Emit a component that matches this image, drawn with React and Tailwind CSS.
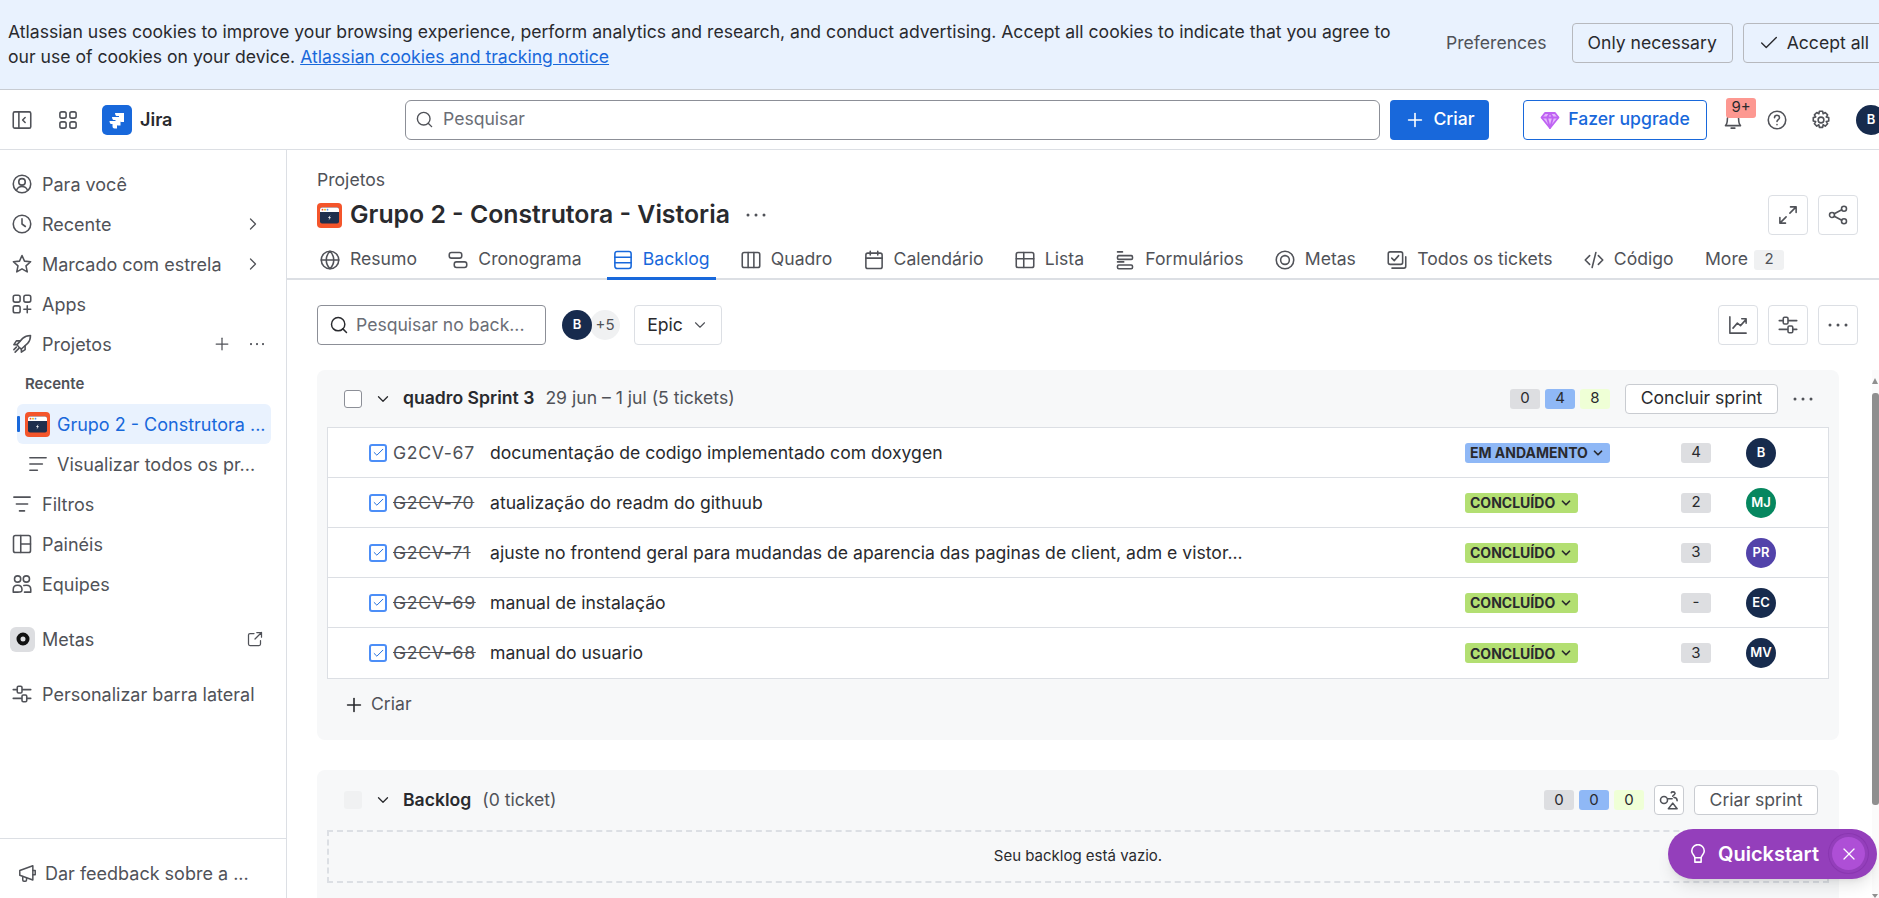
import React from "react";
import { Check, ChevronDown, ChevronRight, Plus, Search, X } from "lucide-react";

const Ico = ({ size = 20, className = "", children }) => (
  <svg
    width={size}
    height={size}
    viewBox="0 0 16 16"
    fill="none"
    stroke="currentColor"
    strokeWidth="1.25"
    strokeLinecap="round"
    strokeLinejoin="round"
    className={"shrink-0 " + className}
  >
    {children}
  </svg>
);

const Dots = ({ className = "" }) => (
  <svg width="22" height="6" viewBox="0 0 22 6" className={"shrink-0 " + className} fill="currentColor">
    <circle cx="3" cy="3" r="1.5" />
    <circle cx="11" cy="3" r="1.5" />
    <circle cx="19" cy="3" r="1.5" />
  </svg>
);

const icons = {
  person: <><circle cx="8" cy="8" r="7" /><circle cx="8" cy="6.3" r="2.6" /><path d="M3.6 13c.8-2 2.4-3 4.4-3s3.600 1 4.400 3" /></>,
  clock: <><circle cx="8" cy="8" r="7" /><path d="M8 3.800V8l2.700 2" /></>,
  star: <path d="M8 1.200l2 4.500 4.900.5-3.700 3.300 1 4.800L8 11.900l-4.200 2.400 1-4.800L1.100 6.200 6 5.700z" />,
  apps: <><rect x="1" y="1" width="5.500" height="5.500" rx="1.500" /><rect x="9.500" y="1" width="5.500" height="5.500" rx="1.500" /><rect x="1" y="9.500" width="5.500" height="5.500" rx="1.500" /><path d="M12.200 9.500v5.500M9.500 12.200H15" /></>,
  rocket: <><path d="M5.500 10.500L4 8.500 8.500 3.500c1.700-1.600 4-2.300 6.300-2.300 0 2.300-.7 4.600-2.300 6.300L7.500 12z" /><path d="M4 8.500H1.500l2-3h3M7.500 12v2.500l3-2v-3" /><path d="M1.500 12.500l2-2M2.500 14.500l3-3" /></>,
  list: <path d="M1.500 3h13M1.500 8h10M1.500 13h6" />,
  filter: <path d="M1.500 2.500h13M3.500 8h9M6 13.500h4" />,
  panels: <><rect x="1.200" y="1.200" width="13.600" height="13.600" rx="1.500" /><path d="M7 1.200v13.600M7 8h7.800" /></>,
  people: <><circle cx="4.500" cy="4" r="2.500" /><circle cx="11.500" cy="4" r="2.500" /><path d="M1 14.500v-2.200c0-2 1.500-3.300 3.500-3.300 2.200 0 3.500 1.500 3.500 3.500s-1.200 2-3.500 2zM9.500 9.200c.6-.2 1.300-.2 2-.2 2 0 3.500 1.300 3.500 3.300v2.200h-5" /></>,
  sliders: <><path d="M1 4.500h3M8.500 4.500H15M1 11.500h6.500M12 11.500h3" /><rect x="4.200" y="1.800" width="3.800" height="5.400" rx="1" /><rect x="8" y="8.800" width="3.800" height="5.400" rx="1" /></>,
  external: <><path d="M7 2.500H3a1.500 1.500 0 0 0-1.500 1.500v9A1.500 1.500 0 0 0 3 14.500h9a1.500 1.500 0 0 0 1.500-1.500V9.500" /><path d="M8 8l6.500-6.500M9.800 1.500h4.700v4.700" /></>,
  megaphone: <><path d="M1.500 5.500l11-4v12l-11-4z" /><path d="M12.500 5.500h2v3.500h-2M4 10.500v3a1 1 0 0 0 1 1h1.200a1 1 0 0 0 1-1v-1.500" /></>,
  globe: <><circle cx="8" cy="8" r="7" /><path d="M1 8h14M8 1c-4 4-4 10 0 14M8 1c4 4 4 10 0 14" /></>,
  timeline: <><rect x="1" y="2" width="10" height="4.500" rx="1.800" /><rect x="5" y="9.500" width="10" height="4.500" rx="1.800" /></>,
  backlog: <><rect x="1.500" y="1.200" width="13" height="13.600" rx="1.800" /><path d="M1.500 5.800h13M1.500 10.200h13" /></>,
  board: <><rect x="1" y="2" width="14" height="12" rx="1.500" /><path d="M5.700 2v12M10.300 2v12" /></>,
  calendar: <><rect x="1.500" y="2.500" width="13" height="12.300" rx="1.500" /><path d="M1.500 6.500h13M5 1v3M11 1v3" /></>,
  table: <><rect x="1" y="2" width="14" height="12" rx="1.500" /><path d="M1 7h14M7 7v7M7 2v5" /></>,
  form: <><path d="M2 1.500h4" /><rect x="2" y="4.500" width="12" height="3" rx="1" /><path d="M2 9.500h5" /><rect x="2" y="12" width="12" height="3" rx="1" /></>,
  goal: <><circle cx="8" cy="8" r="7" /><circle cx="8" cy="8" r="3.500" /></>,
  tickets: <><rect x="1" y="1.500" width="11.500" height="10" rx="1.500" /><path d="M3.800 6.500l2 2 3.500-4M4 14.500h9.500a1.500 1.500 0 0 0 1.500-1.500V5.500" /></>,
  code: <path d="M4.500 4.500L1 8l3.500 3.500M11.500 4.500L15 8l-3.500 3.500M9.500 2l-3 12" />,
  expand: <><path d="M9.500 6.500l5-5M10 1.500h4.500V6M6.500 9.500l-5 5M6 14.500H1.500V10" /></>,
  share: <><circle cx="12.800" cy="3" r="2" /><circle cx="3.200" cy="8" r="2" /><circle cx="12.800" cy="13" r="2" /><path d="M5 7l6-3.200M5 9l6 3.200" /></>,
  chart: <><path d="M1.500 1.500v13h13" /><path d="M4 10.500l3.500-4 2.500 2 4.500-5M11 3h3.500v3.500" /></>,
  shapes: <><circle cx="4" cy="8" r="2.800" /><path d="M9.800 2.200c.3-1 2.800-1 3 .4.200 1.200-1.400 1.500-1.800 2.400M11 10.500L14.500 15h-7z" /><path d="M7 7h3.500M12 6c1.500 0 2.500.8 2.500 2.500" /></>,
  collapse: <><rect x="1" y="1.500" width="14" height="13" rx="1.200" /><path d="M5.500 1.500v13M10.500 6L8.500 8l2 2" /></>,
  grid: <><rect x="1.500" y="1.500" width="5" height="5" rx="1.500" /><rect x="9.500" y="1.500" width="5" height="5" rx="1.500" /><rect x="1.500" y="9.500" width="5" height="5" rx="1.500" /><rect x="9.500" y="9.500" width="5" height="5" rx="1.500" /></>,
  bell: <><path d="M2 12.500c1.500-1.500 1.500-3 1.500-5.500a4.500 4.500 0 0 1 9 0c0 2.500 0 4 1.500 5.500z" /><path d="M6.500 14.500h3" /></>,
  help: <><circle cx="8" cy="8" r="7" /><path d="M6 6.200c0-1.200.9-2 2-2s2 .8 2 1.900c0 1.600-2 1.600-2 3.100M8 11.700v.1" /></>,
  gear: <><circle cx="8" cy="8" r="2.300" /><path d="M6.700 1h2.600l.4 2 1.700-1 1.900 1.900-1.100 1.700 2 .5v2.700l-2 .5 1.100 1.700-1.900 1.900-1.700-1.100-.4 2.100H6.700l-.4-2.100-1.700 1.100-1.900-1.900 1.100-1.700-2-.5V6.100l2-.5-1.100-1.700L4.600 2l1.700 1z" /></>,
  bulb: <><path d="M5.500 11c0-1.500-2.500-2.800-2.500-5.500a5 5 0 0 1 10 0c0 2.700-2.500 4-2.500 5.500z" /><path d="M5.500 14.500h5M5.500 11v3.500M10.500 11v3.500" /></>,
};

const ProjectIcon = () => (
  <svg width="25" height="25" viewBox="0 0 25 25" className="shrink-0">
    <rect width="25" height="25" rx="4" fill="#f4552b" />
    <rect x="3" y="4.500" width="19" height="16" rx="2" fill="#1f2f4d" />
    <path d="M3 6.500a2 2 0 0 1 2-2h15a2 2 0 0 1 2 2v2.500H3z" fill="#fff" />
    <circle cx="5.500" cy="6.700" r="0.900" fill="#f4552b" />
    <circle cx="8" cy="6.700" r="0.900" fill="#f5b400" />
    <circle cx="10.500" cy="6.700" r="0.900" fill="#4c9aff" />
    <path d="M13.500 12l-2.500 3h1.500l-1 2.500 2.500-3.200H12.500z" fill="#fff" />
  </svg>
);

const SideRow = ({ icon, label, right }) => (
  <div className="flex items-center h-10 pl-3 pr-[23px] text-[18px] text-[#505258] whitespace-nowrap">
    <Ico>{icons[icon]}</Ico>
    <span className="ml-[10px] flex-1">{label}</span>
    {right}
  </div>
);

const tabs = [
  ["globe", "Resumo"],
  ["timeline", "Cronograma"],
  ["backlog", "Backlog"],
  ["board", "Quadro"],
  ["calendar", "Calendário"],
  ["table", "Lista"],
  ["form", "Formulários"],
  ["goal", "Metas"],
  ["tickets", "Todos os tickets"],
  ["code", "Código"],
];

const tickets = [
  { key: "G2CV-67", text: "documentação de codigo implementado com doxygen", status: "EM ANDAMENTO", est: "4", who: "B", color: "bg-[#172b4d]" },
  { key: "G2CV-70", text: "atualização do readm do githuub", status: "CONCLUÍDO", est: "2", who: "MJ", color: "bg-[#06875f]" },
  { key: "G2CV-71", text: "ajuste no frontend geral para mudandas de aparencia das paginas de client, adm e vistor...", status: "CONCLUÍDO", est: "3", who: "PR", color: "bg-[#5243aa]" },
  { key: "G2CV-69", text: "manual de instalação", status: "CONCLUÍDO", est: "-", who: "EC", color: "bg-[#172b4d]" },
  { key: "G2CV-68", text: "manual do usuario", status: "CONCLUÍDO", est: "3", who: "MV", color: "bg-[#172b4d]" },
];

const Avatar = ({ who, color }) => (
  <div className={"w-[30px] h-[30px] rounded-full flex items-center justify-center text-white text-[13px] font-semibold shrink-0 " + color}>
    {who}
  </div>
);

const Counts = ({ values }) => (
  <div className="flex gap-[5px] text-[15px] text-[#292a2e]">
    <span className="w-[30px] h-5 rounded-[3px] bg-[#dddee1] flex items-center justify-center">{values[0]}</span>
    <span className="w-[30px] h-5 rounded-[3px] bg-[#8fb8f6] flex items-center justify-center">{values[1]}</span>
    <span className="w-[30px] h-5 rounded-[3px] bg-[#efffd6] flex items-center justify-center">{values[2]}</span>
  </div>
);

const SquareBtn = ({ icon }) => (
  <button className="w-10 h-10 rounded-[4px] border border-[#dcdfe4] flex items-center justify-center text-[#505258]">
    {icon}
  </button>
);

const TicketRow = ({ t, last }) => {
  const done = t.status === "CONCLUÍDO";
  return (
    <div className={"flex items-center h-[50px] pl-[41px] " + (last ? "" : "border-b border-[#dcdfe4]")}>
      <span className="w-[18px] h-[18px] rounded-[3px] border-2 border-[#4c8ef7] bg-white flex items-center justify-center shrink-0">
        <Check size={13} strokeWidth={1.75} className="text-[#1868db]" />
      </span>
      <span className={"ml-[6px] w-[82px] pt-[1px] shrink-0 text-[#505258] tracking-[0.7px] whitespace-nowrap " + (done ? "line-through" : "")}>{t.key}</span>
      <div className="ml-[15px] w-[975px] pt-[1px] shrink-0 whitespace-nowrap text-[#292a2e]">{t.text}</div>
      <div className="w-[216px] shrink-0">
        <span className={"inline-flex items-center justify-between h-5 min-w-[113px] px-[5px] gap-[3px] rounded-[3px] text-[14px] font-bold text-[#292a2e] " + (done ? "bg-[#b3df72]" : "bg-[#8fb8f6]")}>
          {t.status}
          <ChevronDown size={14} strokeWidth={3} />
        </span>
      </div>
      <span className="w-[30px] h-5 rounded-[3px] bg-[#dddee1] flex items-center justify-center text-[15px] text-[#292a2e] shrink-0">{t.est}</span>
      <div className="ml-[35px]">
        <Avatar who={t.who} color={t.color} />
      </div>
    </div>
  );
};

export default function App() {
  return (
    <div className="relative w-[1879px] h-[898px] overflow-hidden bg-white flex flex-col text-[17.6px] text-[#292a2e]" style={{ fontFamily: "Inter, 'Noto Sans', sans-serif" }}>
      {/* Cookie banner */}
      <div className="h-[90px] shrink-0 bg-[#e9f2fe] border-b border-[#c8ccd2] flex items-center pl-[8px]">
        <p className="w-[1395px] leading-[25px] -mt-[1px] shrink-0">
          Atlassian uses cookies to improve your browsing experience, perform analytics and research, and conduct advertising. Accept all cookies to indicate that you agree to our use of cookies on your device.{" "}
          <span className="text-[#1868db] underline">Atlassian cookies and tracking notice</span>
        </p>
        <span className="ml-[43px] text-[#505258] -mt-[3px] shrink-0">Preferences</span>
        <button className="ml-[25px] h-10 w-[161px] shrink-0 rounded-[4px] border border-[#b7b9be] -mt-[3px] whitespace-nowrap">Only necessary</button>
        <button className="ml-[10px] h-10 w-[160px] pl-[14px] shrink-0 rounded-[4px] border border-[#b7b9be] flex items-center gap-[7px] -mt-[3px] whitespace-nowrap">
          <Check size={22} strokeWidth={1.5} />
          Accept all
        </button>
      </div>

      {/* Top nav */}
      <div className="h-[60px] shrink-0 border-b border-[#dcdfe4] flex items-center pl-3 text-[#505258]">
        <Ico>{icons.collapse}</Ico>
        <Ico size={20} className="ml-[26px]">{icons.grid}</Ico>
        <div className="ml-[24px] w-[30px] h-[30px] rounded-[5px] bg-[#1868db] flex items-center justify-center shrink-0">
          <svg width="20" height="20" viewBox="0 0 20 20" fill="#fff">
            <path d="M8 3h9v9h-2.500c-1.500 0-2.500-1-2.500-2.500V6H9.500C8.800 6 8 4.500 8 3z" />
            <path d="M5 7h8.500v8.500h-2.500c-1.500 0-2.500-1-2.500-2.500V10H6.500C5.800 10 5 8.500 5 7z" />
            <path d="M2.500 11h7.500v7.500H7.500C6 18.500 5.500 17.500 5.500 16v-2H4C3.300 14 2.500 12.500 2.500 11z" />
          </svg>
        </div>
        <span className="ml-[8px] text-[18px] font-semibold text-[#292a2e] w-[265px] shrink-0">Jira</span>
        <div className="w-[975px] h-10 shrink-0 rounded-[6px] border border-[#8c8f97] flex items-center pl-[9px] gap-[9px] text-[#6b6e76]">
          <Search size={19} strokeWidth={1.75} className="text-[#505258]" />
          Pesquisar
        </div>
        <button className="ml-[10px] w-[99px] h-10 shrink-0 rounded-[4px] bg-[#1868db] text-white font-medium flex items-center justify-center gap-[7px]">
          <Plus size={22} strokeWidth={1.75} />
          Criar
        </button>
        <button className="ml-[34px] w-[184px] h-10 shrink-0 rounded-[4px] border border-[#1868db] text-[#1868db] font-medium flex items-center justify-center gap-[8px] whitespace-nowrap">
          <svg width="20" height="20" viewBox="0 0 20 20" fill="none" stroke="#bf63f3" strokeWidth="1.800" strokeLinejoin="round">
            <path d="M5 3h10l3.500 4.500L10 18 1.500 7.500z" fill="#e5b8fb" />
            <path d="M1.500 7.500h17M7 7.500L10 18l3-10.500L10 3 7 7.500z" />
          </svg>
          Fazer upgrade
        </button>
        <div className="relative ml-4 w-5 h-5 shrink-0">
          <Ico>{icons.bell}</Ico>
          <span className="absolute -top-[12px] left-[3px] w-[30px] h-5 rounded-[3px] bg-[#fd9891] text-[#292a2e] text-[15px] flex items-center justify-center">9+</span>
        </div>
        <Ico className="ml-[24px]">{icons.help}</Ico>
        <Ico className="ml-[24px]">{icons.gear}</Ico>
        <div className="ml-[25px]">
          <Avatar who="B" color="bg-[#172b4d]" />
        </div>
      </div>

      <div className="flex flex-1 min-h-0">
        {/* Sidebar */}
        <aside className="w-[287px] shrink-0 border-r border-[#dcdfe4] flex flex-col">
          <div className="flex-1 pt-[14px]">
            <SideRow icon="person" label="Para você" />
            <SideRow icon="clock" label="Recente" right={<ChevronRight size={20} strokeWidth={1.5} />} />
            <SideRow icon="star" label="Marcado com estrela" right={<ChevronRight size={20} strokeWidth={1.5} />} />
            <SideRow icon="apps" label="Apps" />
            <SideRow
              icon="rocket"
              label="Projetos"
              right={
                <div className="flex items-center gap-[14px] -mr-[5px]">
                  <Plus size={20} strokeWidth={1.5} />
                  <Dots className="scale-75" />
                </div>
              }
            />
            <div className="h-10 flex items-center pl-[25px] text-[15px] font-semibold text-[#505258]">Recente</div>
            <div className="relative ml-[17px] w-[254px] h-10 rounded-[6px] bg-[#e9f2fe] flex items-center pl-[8px] text-[18px] text-[#1868db] whitespace-nowrap">
              <span className="absolute left-0 top-[12px] w-[3px] h-4 bg-[#1868db] rounded-[1px]" />
              <ProjectIcon />
              <span className="ml-[7px]">Grupo 2 - Construtora ...</span>
            </div>
            <div className="h-10 flex items-center pl-7 text-[18px] text-[#505258] whitespace-nowrap">
              <Ico>{icons.list}</Ico>
              <span className="ml-[9px]">Visualizar todos os pr...</span>
            </div>
            <SideRow icon="filter" label="Filtros" />
            <SideRow icon="panels" label="Painéis" />
            <SideRow icon="people" label="Equipes" />
            <div className="mt-[15px] h-10 flex items-center pl-[10px] pr-[23px] text-[18px] text-[#505258]">
              <span className="w-[25px] h-[25px] rounded-[6px] bg-[#dddee1] flex items-center justify-center text-[#111] shrink-0">
                <svg width="16" height="16" viewBox="0 0 16 16" fill="none" stroke="currentColor" strokeWidth="4">
                  <circle cx="8" cy="8" r="4.500" />
                </svg>
              </span>
              <span className="ml-[7px] flex-1">Metas</span>
              <Ico size={16}>{icons.external}</Ico>
            </div>
            <div className="mt-[15px]">
              <SideRow icon="sliders" label="Personalizar barra lateral" />
            </div>
          </div>
          <div className="h-[60px] shrink-0 border-t border-[#dcdfe4] flex items-start pt-[25px] pl-[18px] text-[18px] text-[#505258] whitespace-nowrap">
            <Ico size={19}>{icons.megaphone}</Ico>
            <span className="ml-[8px] leading-5">Dar feedback sobre a ...</span>
          </div>
        </aside>

        {/* Main */}
        <main className="flex-1 min-w-0 overflow-hidden">
          <div className="h-[45px] pl-[30px] flex items-end text-[#505258] pb-[2px]">Projetos</div>
          <div className="h-10 pl-[30px] pr-[21px] flex items-center">
            <ProjectIcon />
            <h1 className="ml-[8px] text-[24.8px] font-semibold text-[#292a2e]">Grupo 2 - Construtora - Vistoria</h1>
            <Dots className="ml-[15px] text-[#505258]" />
            <div className="ml-auto flex gap-[10px]">
              <SquareBtn icon={<Ico>{icons.expand}</Ico>} />
              <SquareBtn icon={<Ico>{icons.share}</Ico>} />
            </div>
          </div>
          <div className="h-[45px] border-b-2 border-[#dcdfe4] flex pl-[27px] gap-[19.3px] text-[#505258]">
            {tabs.map(([icon, label]) => {
              const active = label === "Backlog";
              return (
                <div key={label} className={"relative h-[45px] px-[6px] pt-[4px] flex items-center gap-[10px] whitespace-nowrap " + (active ? "text-[#1868db]" : "")}>
                  <Ico>{icons[icon]}</Ico>
                  {label}
                  {active && <span className="absolute left-0 right-0 bottom-0 h-[3px] bg-[#1868db]" />}
                </div>
              );
            })}
            <div className="h-[45px] px-[6px] pt-[4px] flex items-center gap-[6px]">
              More
              <span className="w-[30px] h-5 rounded-[3px] bg-[#f0f1f2] text-[15px] flex items-center justify-center">2</span>
            </div>
          </div>

          {/* Toolbar */}
          <div className="mt-[25px] ml-[30px] w-[1541px] h-10 flex items-center">
            <div className="w-[229px] h-10 rounded-[4px] border border-[#8c8f97] flex items-center pl-[11px] gap-[7px] text-[#6b6e76] whitespace-nowrap">
              <Search size={20} strokeWidth={1.75} className="text-[#292a2e]" />
              Pesquisar no back...
            </div>
            <div className="ml-4 flex items-center">
              <Avatar who="B" color="bg-[#172b4d] relative z-10" />
              <span className="-ml-[2px] w-[30px] h-[30px] rounded-full bg-[#f0f1f2] text-[15px] flex items-center justify-center text-[#505258]">+5</span>
            </div>
            <button className="ml-[14px] w-[88px] h-10 rounded-[4px] border border-[#dcdfe4] flex items-center justify-center gap-[8px]">
              Epic
              <ChevronDown size={18} strokeWidth={1.5} className="text-[#505258]" />
            </button>
            <div className="ml-auto flex gap-[10px]">
              <SquareBtn icon={<Ico>{icons.chart}</Ico>} />
              <SquareBtn icon={<Ico>{icons.sliders}</Ico>} />
              <SquareBtn icon={<Dots />} />
            </div>
          </div>

          {/* Sprint */}
          <section className="mt-[25px] ml-[30px] w-[1522px] h-[370px] rounded-[8px] bg-[#f7f8f9] px-[10px]">
            <div className="h-[57px] flex items-center pl-[17px] pr-[15px]">
              <span className="w-[18px] h-[18px] rounded-[3px] border border-[#8c8f97] bg-white shrink-0" />
              <ChevronDown size={18} strokeWidth={1.75} className="ml-[12px] text-[#292a2e]" />
              <span className="ml-[11px] font-semibold">quadro Sprint 3</span>
              <span className="ml-[11px] text-[#505258]">29 jun – 1 jul (5 tickets)</span>
              <div className="ml-auto">
                <Counts values={["0", "4", "8"]} />
              </div>
              <button className="ml-[15px] w-[153px] h-[30px] rounded-[4px] border border-[#c9ccd1] bg-white whitespace-nowrap">Concluir sprint</button>
              <Dots className="ml-[14px] text-[#505258]" />
            </div>
            <div className="border border-[#dcdfe4] bg-white">
              {tickets.map((t, i) => (
                <TicketRow key={t.key} t={t} last={i === tickets.length - 1} />
              ))}
            </div>
            <div className="h-[51px] pl-[16px] flex items-center text-[#505258]">
              <Plus size={22} strokeWidth={1.75} className="text-[#292a2e]" />
              <span className="ml-[6px]">Criar</span>
            </div>
          </section>

          {/* Backlog */}
          <section className="mt-[30px] ml-[30px] w-[1522px] h-[140px] rounded-t-[8px] bg-[#f7f8f9] px-[10px]">
            <div className="h-[60px] flex items-center pl-[17px] pr-[11px]">
              <span className="w-[18px] h-[18px] rounded-[3px] bg-[#f0f1f2] shrink-0" />
              <ChevronDown size={18} strokeWidth={1.75} className="ml-[12px] text-[#292a2e]" />
              <span className="ml-[11px] font-semibold">Backlog</span>
              <span className="ml-[11px] text-[#505258]">(0 ticket)</span>
              <div className="ml-auto">
                <Counts values={["0", "0", "0"]} />
              </div>
              <button className="ml-[10px] w-[30px] h-[30px] rounded-[4px] border border-[#c9ccd1] bg-white flex items-center justify-center text-[#505258]">
                <Ico size={20}>{icons.shapes}</Ico>
              </button>
              <button className="ml-[10px] w-[124px] h-[30px] rounded-[4px] border border-[#c9ccd1] bg-white text-[#505258] whitespace-nowrap">Criar sprint</button>
            </div>
            <div className="h-[53px] border-2 border-dashed border-[#dcdfe4] flex items-center justify-center text-[15px]">
              Seu backlog está vazio.
            </div>
          </section>
        </main>
      </div>

      {/* Page scrollbar */}
      <div className="absolute right-0 top-[370px] bottom-0 w-[7px] bg-[#fbfbfb]">
        <div className="absolute left-0 top-[8px] border-x-[3px] border-x-transparent border-b-[6px] border-b-[#8f8f8f]" />
        <div className="absolute left-0 right-0 top-[23px] h-[412px] rounded-[3px] bg-[#8f8f8f]" />
        <div className="absolute left-0 bottom-0 border-x-[3px] border-x-transparent border-t-[4px] border-t-[#8f8f8f]" />
      </div>

      {/* Quickstart */}
      <div className="absolute left-[1668px] top-[829px] w-[209px] h-[50px] rounded-full bg-[#943fbb] shadow-lg flex items-center pl-[20px] text-white">
        <Ico size={20}>{icons.bulb}</Ico>
        <span className="ml-[10px] text-[20px] font-semibold">Quickstart</span>
        <span className="absolute right-[12px] top-[8px] w-[33px] h-[33px] rounded-full bg-[#ae4fd6] ring-1 ring-[#8a37b0] ring-offset-[3px] ring-offset-[#943fbb] flex items-center justify-center">
          <X size={20} strokeWidth={1.5} />
        </span>
      </div>
    </div>
  );
}
